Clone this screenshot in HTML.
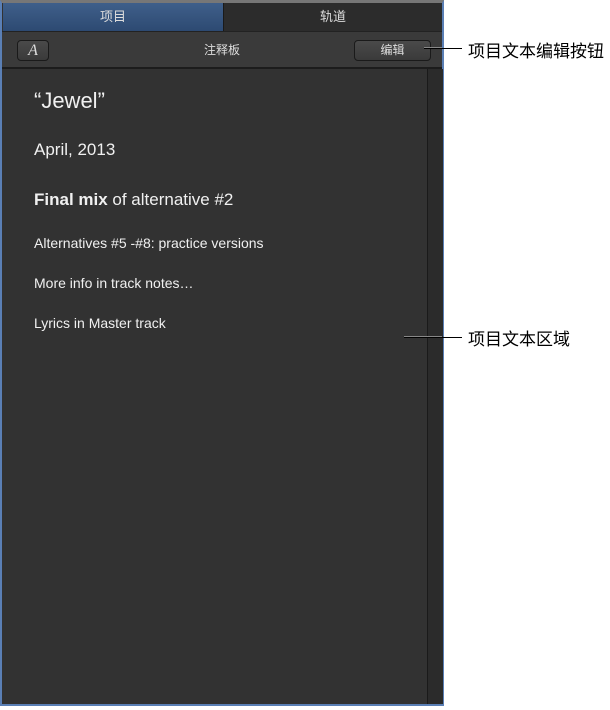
<!DOCTYPE html>
<html><head><meta charset="utf-8"><style>
body{margin:0;width:610px;height:710px;background:#fff;position:relative;overflow:hidden;font-family:"Liberation Sans","Noto Sans CJK SC",sans-serif}
.panel{position:absolute;left:0;top:0;width:440px;height:701px;background:#323232;border:2px solid #5a7fb5;border-top:3px solid #777}
.tab{position:absolute;top:0;height:28px;line-height:28px;text-align:center;font-size:13px;color:#ddd}
.t1{left:1px;width:220px;background:linear-gradient(#3f5f8a,#2d4a72);border-right:1px solid #1a1a1a}
.t2{left:222px;width:218px;background:#2c2c2c}
.bar{position:absolute;left:0;top:28px;width:440px;height:35px;background:#3a3a3a;border-top:1px solid #222;border-bottom:2px solid #1c1c1c}
.btn{position:absolute;border:1px solid #1a1a1a;border-radius:4px;background:linear-gradient(#4a4a4a,#3a3a3a);color:#ddd;text-align:center}
.scroll{position:absolute;left:425px;top:66px;width:15px;height:635px;background:#2b2b2b;border-left:1px solid #1a1a1a}
.txt{position:absolute;left:34px;color:#f0f0f0;white-space:nowrap}
.line{position:absolute;height:1px;background:#888;border-bottom:1px solid #000}
.lab{position:absolute;left:468px;font-size:17px;color:#000}
</style></head><body>
<div class="panel">
<div class="tab t1">项目</div><div class="tab t2">轨道</div>
<div class="bar">
<div class="btn" style="left:15px;top:8px;width:30px;height:19px;font:italic 16px 'Liberation Serif',serif;line-height:19px">A</div>
<div style="position:absolute;left:0;width:440px;top:9px;text-align:center;font-size:12px;color:#ddd">注释板</div>
<div class="btn" style="left:352px;top:8px;width:75px;height:19px;font-size:12px;line-height:19px">编辑</div>
</div>
<div class="scroll"></div>
</div>
<div class="txt" style="top:88px;font-size:22px">“Jewel”</div>
<div class="txt" style="top:140px;font-size:17px">April, 2013</div>
<div class="txt" style="top:190px;font-size:17px"><b>Final mix</b> of alternative #2</div>
<div class="txt" style="top:235px;font-size:14px">Alternatives #5 -#8: practice versions</div>
<div class="txt" style="top:275px;font-size:14px">More info in track notes…</div>
<div class="txt" style="top:315px;font-size:14px">Lyrics in Master track</div>
<div class="line" style="left:424px;top:47px;width:18px"></div>
<div class="line" style="left:442px;top:48px;width:20px;background:#000;border:none"></div>
<div class="line" style="left:404px;top:336px;width:38px"></div>
<div class="line" style="left:442px;top:337px;width:20px;background:#000;border:none"></div>
<div class="lab" style="top:37px">项目文本编辑按钮</div>
<div class="lab" style="top:325px">项目文本区域</div>
</body></html>
